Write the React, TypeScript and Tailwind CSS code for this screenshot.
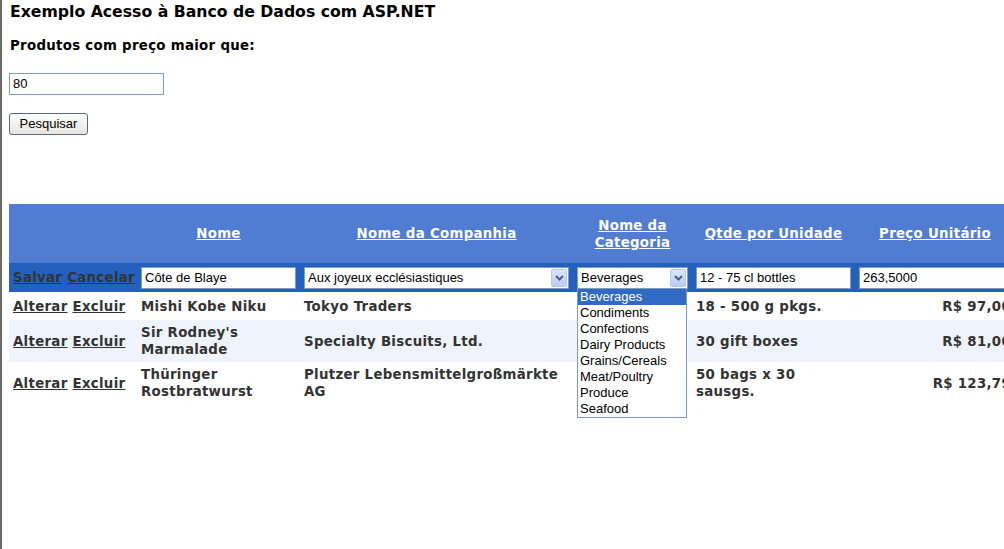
import React from "react";

const verdana = "font-['DejaVu_Sans',Verdana,sans-serif]";
const arial = "font-['Liberation_Sans',Arial,sans-serif]";

const categories = [
  "Beverages",
  "Condiments",
  "Confections",
  "Dairy Products",
  "Grains/Cereals",
  "Meat/Poultry",
  "Produce",
  "Seafood",
];

const products = [
  { nome: "Mishi Kobe Niku", companhia: "Tokyo Traders", qtde: "18 - 500 g pkgs.", preco: "R$ 97,00", h: "h-[28px]", bg: "bg-white" },
  { nome: "Sir Rodney's Marmalade", companhia: "Specialty Biscuits, Ltd.", qtde: "30 gift boxes", preco: "R$ 81,00", h: "h-[42px]", bg: "bg-[#eff3fb]" },
  { nome: "Thüringer Rostbratwurst", companhia: "Plutzer Lebensmittelgroßmärkte AG", qtde: "50 bags x 30 sausgs.", preco: "R$ 123,79", h: "h-[42px]", bg: "bg-white" },
];

function Chevron() {
  return (
    <svg width="9" height="6" viewBox="0 0 9 6">
      <path d="M1 1 L4.5 4.5 L8 1" fill="none" stroke="#4d6185" strokeWidth="2" />
    </svg>
  );
}

function FakeSelect({ value, width }: { value: string; width: string }) {
  return (
    <div className={`${width} h-[22px] flex items-center bg-white border border-[#7f9db9] ${arial} text-[13px] font-normal tracking-normal text-black`}>
      <span className="flex-1 pl-[3px] truncate">{value}</span>
      <span className="w-[16px] h-[18px] mr-[1px] flex items-center justify-center rounded-[2px] bg-gradient-to-b from-[#dbe6fe] to-[#b9cdf7] border border-[#b5c8f2]">
        <Chevron />
      </span>
    </div>
  );
}

function TextBox({ value, width }: { value: string; width: string }) {
  return (
    <div className={`${width} h-[22px] flex items-center bg-white border border-[#7f9db9] ${arial} text-[13px] font-normal tracking-normal text-black pl-[3px] overflow-hidden whitespace-nowrap`}>
      {value}
    </div>
  );
}

function HeaderLink({ children }: { children: React.ReactNode }) {
  return <a className="text-white underline cursor-pointer">{children}</a>;
}

export default function App() {
  return (
    <div className={`w-[1004px] h-[549px] overflow-hidden bg-white border-l-2 border-[#6b6b6b] pl-[7px] ${verdana} text-black`}>
      <h1 className="mt-[2px] pl-[1px] text-[15.7px] leading-[19px] font-bold">
        Exemplo Acesso à Banco de Dados com ASP.NET
      </h1>
      <p className="mt-[17px] pl-[1px] text-[13.33px] tracking-[0.3px] leading-[16px] font-bold">Produtos com preço maior que:</p>
      <div className="mt-[19px]">
        <TextBox value="80" width="w-[155px]" />
      </div>
      <button className={`mt-[18px] w-[79px] h-[22px] rounded-[3px] border border-[#536a86] bg-gradient-to-b from-white to-[#e6e4dc] ${arial} text-[13px] text-black`}>
        Pesquisar
      </button>

      <table className="mt-[69px] table-fixed border-collapse w-[1006px] text-[13.33px] tracking-[0.3px] leading-[17px] font-bold text-[#333333]">
        <colgroup>
          <col className="w-[128px]" />
          <col className="w-[163px]" />
          <col className="w-[273px]" />
          <col className="w-[119px]" />
          <col className="w-[163px]" />
          <col className="w-[160px]" />
        </colgroup>
        <thead>
          <tr className="h-[59px] bg-[#507cd1] text-center">
            <th className="p-1"></th>
            <th className="p-1"><HeaderLink>Nome</HeaderLink></th>
            <th className="p-1"><HeaderLink>Nome da Companhia</HeaderLink></th>
            <th className="p-1"><HeaderLink>Nome da Categoria</HeaderLink></th>
            <th className="p-1"><HeaderLink>Qtde por Unidade</HeaderLink></th>
            <th className="p-1"><HeaderLink>Preço Unitário</HeaderLink></th>
          </tr>
        </thead>
        <tbody>
          <tr className="h-[29px] bg-[#2461bf]">
            <td className="px-1 whitespace-nowrap">
              <a className="underline text-[#333333]">Salvar</a> <a className="underline text-[#333333]">Cancelar</a>
            </td>
            <td className="px-1">
              <TextBox value="Côte de Blaye" width="w-[155px]" />
            </td>
            <td className="px-1">
              <FakeSelect value="Aux joyeux ecclésiastiques" width="w-[265px]" />
            </td>
            <td className="px-1">
              <div className="relative">
                <FakeSelect value="Beverages" width="w-[111px]" />
                <ul className={`absolute left-0 top-[21px] z-10 w-[110px] bg-white border border-[#7f9db9] ${arial} text-[13px] leading-[16px] font-normal tracking-normal text-black`}>
                  {categories.map((c, i) => (
                    <li key={c} className={`pl-[2px] h-[16px] ${i === 0 ? "bg-[#316ac5] text-white" : ""}`}>
                      {c}
                    </li>
                  ))}
                </ul>
              </div>
            </td>
            <td className="px-1">
              <TextBox value="12 - 75 cl bottles" width="w-[155px]" />
            </td>
            <td className="px-1">
              <TextBox value="263,5000" width="w-[155px]" />
            </td>
          </tr>
          {products.map((p) => (
            <tr key={p.nome} className={`${p.h} ${p.bg}`}>
              <td className="px-1 whitespace-nowrap">
                <a className="underline">Alterar</a> <a className="underline">Excluir</a>
              </td>
              <td className="px-1">{p.nome}</td>
              <td className="px-1">{p.companhia}</td>
              <td className="px-1"></td>
              <td className="px-1">{p.qtde}</td>
              <td className="px-1 text-right">{p.preco}</td>
            </tr>
          ))}
        </tbody>
      </table>
    </div>
  );
}
